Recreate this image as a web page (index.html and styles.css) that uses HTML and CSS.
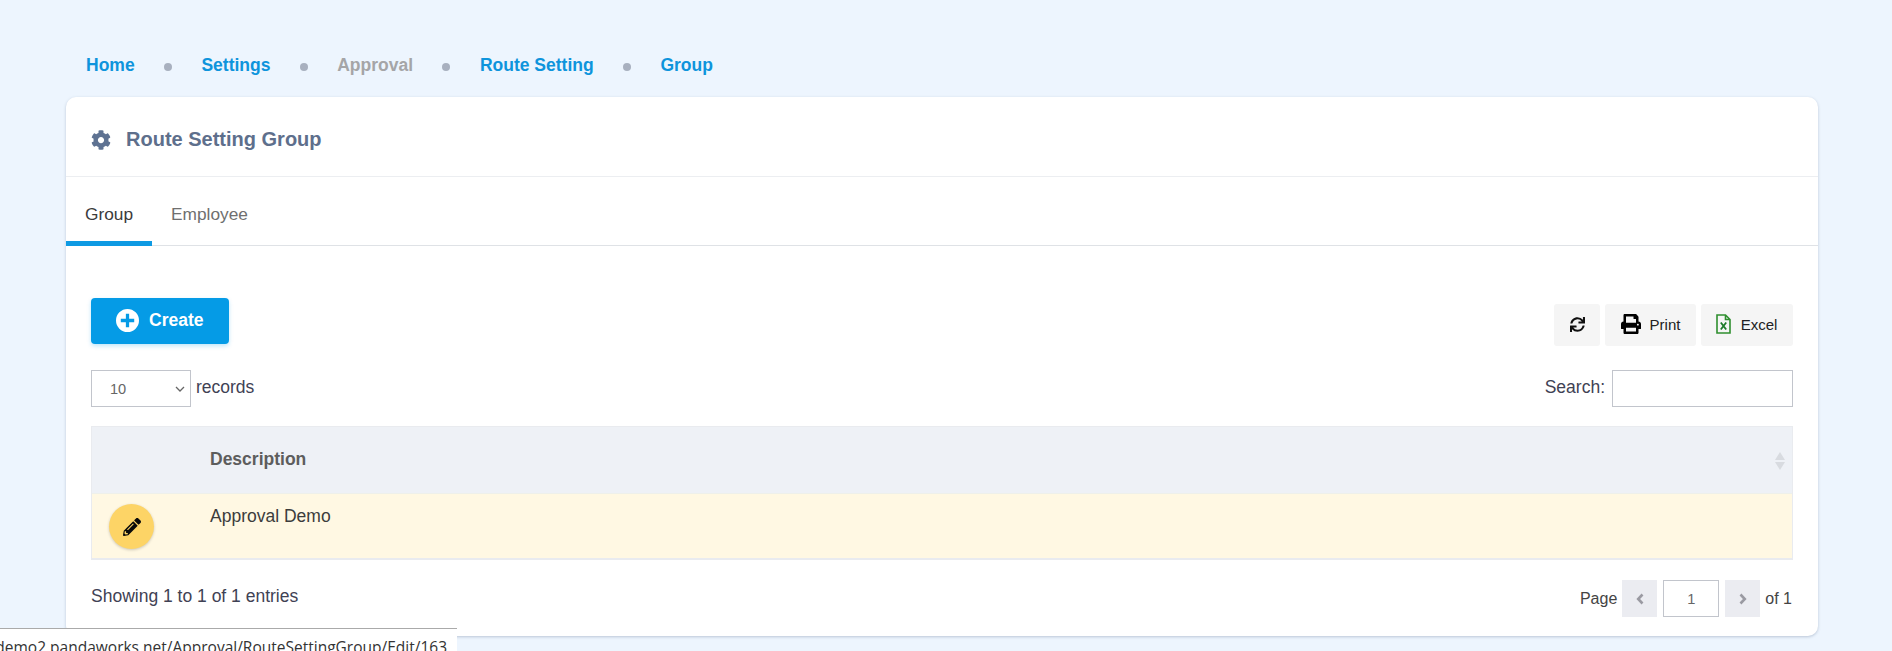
FILE: index.html
```html
<!DOCTYPE html>
<html lang="en">
<head>
<meta charset="utf-8">
<title>Route Setting Group</title>
<link rel="stylesheet" href="styles.css">
</head>
<body>
<div class="page">
  <nav class="crumbs">
    <a class="crumb">Home</a><span class="dot"></span>
    <a class="crumb">Settings</a><span class="dot"></span>
    <span class="crumb muted">Approval</span><span class="dot"></span>
    <a class="crumb">Route Setting</a><span class="dot"></span>
    <a class="crumb">Group</a>
  </nav>
  <section class="card">
    <header class="card-head">
      <svg class="gear" viewBox="0 0 512 512"><path d="M487.4 315.7l-42.6-24.6c4.3-23.2 4.3-47 0-70.2l42.6-24.6c4.9-2.8 7.1-8.6 5.5-14-11.1-35.6-30-67.8-54.7-94.6-3.8-4.1-10-5.1-14.8-2.3L380.8 110c-17.9-15.4-38.5-27.3-60.8-35.1V25.8c0-5.6-3.9-10.5-9.4-11.7-36.7-8.2-74.3-7.8-109.2 0-5.5 1.2-9.4 6.1-9.4 11.7V75c-22.2 7.9-42.8 19.8-60.8 35.1L88.7 85.5c-4.9-2.8-11-1.9-14.8 2.3-24.7 26.7-43.6 58.9-54.7 94.6-1.7 5.4.6 11.2 5.5 14L67.3 221c-4.3 23.2-4.3 47 0 70.2l-42.6 24.6c-4.9 2.8-7.1 8.6-5.5 14 11.1 35.6 30 67.8 54.7 94.6 3.8 4.1 10 5.1 14.8 2.3l42.6-24.6c17.9 15.4 38.5 27.3 60.8 35.1v49.2c0 5.6 3.9 10.5 9.4 11.7 36.7 8.2 74.3 7.8 109.2 0 5.5-1.2 9.4-6.1 9.4-11.7v-49.2c22.2-7.9 42.8-19.8 60.8-35.1l42.6 24.6c4.9 2.8 11 1.9 14.8-2.3 24.7-26.7 43.6-58.9 54.7-94.6 1.5-5.5-.7-11.3-5.6-14.1zM256 336c-44.1 0-80-35.9-80-80s35.9-80 80-80 80 35.9 80 80-35.9 80-80 80z"/></svg>
      <h1 class="title">Route Setting Group</h1>
    </header>
    <div class="tabs">
      <a class="tab active">Group</a>
      <a class="tab">Employee</a>
    </div>
    <div class="body">
      <div class="toolbar">
        <button class="create">
          <svg class="plus" viewBox="0 0 24 24"><path fill-rule="evenodd" d="M12 0a12 12 0 1 1 0 24a12 12 0 0 1 0-24zM10.3 5v5.3H5v3.4h5.3V19h3.4v-5.3H19v-3.4h-5.3V5z"/></svg>
          <span class="create-label">Create</span>
        </button>
        <div class="tools">
          <button class="tool icon-only"><svg class="ico-sync" viewBox="0 0 512 512"><path d="M440.65 12.57l4 82.77A247.16 247.16 0 0 0 255.83 8C134.73 8 33.91 94.92 12.29 209.82A12 12 0 0 0 24.09 224h49.05a12 12 0 0 0 11.67-9.26 175.91 175.91 0 0 1 317-56.94l-101.46-4.86a12 12 0 0 0-12.57 12v47.41a12 12 0 0 0 12 12H500a12 12 0 0 0 12-12V12a12 12 0 0 0-12-12h-47.37a12 12 0 0 0-11.98 12.57zM255.83 432a175.61 175.61 0 0 1-146-77.8l101.8 4.87a12 12 0 0 0 12.57-12v-47.4a12 12 0 0 0-12-12H12a12 12 0 0 0-12 12V500a12 12 0 0 0 12 12h47.35a12 12 0 0 0 12-12.6l-4.15-82.57A247.17 247.17 0 0 0 255.83 504c121.11 0 221.93-86.92 243.55-201.82a12 12 0 0 0-11.8-14.18h-49.05a12 12 0 0 0-11.67 9.26A175.86 175.86 0 0 1 255.83 432z"/></svg></button>
          <button class="tool print"><svg class="ico-print" viewBox="0 0 512 512"><path d="M448 192V77.25c0-8.49-3.37-16.62-9.37-22.63L393.37 9.37c-6-6-14.14-9.37-22.63-9.37H96C78.33 0 64 14.33 64 32v160c-35.35 0-64 28.65-64 64v112c0 8.84 7.16 16 16 16h48v96c0 17.67 14.33 32 32 32h320c17.67 0 32-14.33 32-32v-96h48c8.84 0 16-7.16 16-16V256c0-35.35-28.65-64-64-64zm-64 256H128v-96h256v96zm0-224H128V64h192v48c0 8.84 7.16 16 16 16h48v96zm48 72c-13.25 0-24-10.75-24-24 0-13.26 10.75-24 24-24s24 10.74 24 24c0 13.25-10.75 24-24 24z"/></svg><span class="tool-label">Print</span></button>
          <button class="tool excel"><svg class="ico-excel" viewBox="0 0 15 20"><path class="sheet" d="M1 1h8.5L14 5.5V19H1zM9.5 1v4.5H14"/><path class="cross" d="M4.8 8.5l5.4 7M10.2 8.5l-5.4 7"/></svg><span class="tool-label">Excel</span></button>
        </div>
      </div>
      <div class="filters">
        <label class="length"><select class="select"><option>10</option><option>25</option><option>50</option></select> records</label>
        <label class="search">Search: <input class="search-input" type="text"></label>
      </div>
      <div class="table">
        <div class="row head">
          <div class="cell-action"></div>
          <div class="cell-desc">Description</div>
          <div class="sort"><span class="up"></span><span class="down"></span></div>
        </div>
        <div class="row data">
          <div class="cell-action">
            <button class="edit"><svg class="ico-pencil" viewBox="0 0 512 512"><path d="M497.9 142.1l-46.1 46.1c-4.7 4.7-12.3 4.7-17 0l-111-111c-4.7-4.7-4.7-12.3 0-17l46.1-46.1c18.7-18.7 49.1-18.7 67.9 0l60.1 60.1c18.8 18.7 18.8 49.1 0 67.9zM284.2 99.8L21.6 362.4.4 483.9c-2.9 16.4 11.4 30.6 27.8 27.8l121.5-21.3 262.6-262.6c4.7-4.7 4.7-12.3 0-17l-111-111c-4.8-4.7-12.4-4.7-17.1 0zM124.1 339.9c-5.5-5.5-5.5-14.3 0-19.8l154-154c5.5-5.5 14.3-5.5 19.8 0s5.5 14.3 0 19.8l-154 154c-5.5 5.5-14.3 5.5-19.8 0zM88 424h48v36.3l-64.5 11.3-31.1-31.1L51.7 376H88v48z"/></svg></button>
          </div>
          <div class="cell-desc">Approval Demo</div>
        </div>
      </div>
      <div class="foot">
        <div class="info">Showing 1 to 1 of 1 entries</div>
        <div class="pager">
          Page
          <button class="page-btn"><svg class="chev" viewBox="0 0 10 14"><path d="M7.5 2.5L3.2 7l4.3 4.5"/></svg></button>
          <input class="page-input" type="text" value="1">
          <button class="page-btn"><svg class="chev" viewBox="0 0 10 14"><path d="M2.5 2.5L6.8 7l-4.3 4.5"/></svg></button>
          of 1
        </div>
      </div>
    </div>
  </section>
</div>
<div class="status"><span>demo2.pandaworks.net/Approval/RouteSettingGroup/Edit/163</span></div>
</body>
</html>
```
FILE: styles.css
```css
* { box-sizing: border-box; }
html, body { margin: 0; height: 100%; overflow: hidden; }
body {
  background: #edf5fe;
  font-family: "Liberation Sans", Arial, sans-serif;
  font-size: 17.5px;
  color: #3f4254;
}
button { font-family: inherit; border: 0; padding: 0; cursor: pointer; }

.page { padding: 55px 74px 0 66px; }

.crumbs { display: flex; align-items: center; height: 20px; padding-left: 20px; margin-bottom: 22px; }
.crumb { font-weight: 700; font-size: 17.5px; color: #0e94dc; white-space: nowrap; }
.crumb.muted { color: #a5a5a7; }
.dot { width: 8px; height: 8px; border-radius: 50%; background: #a8b0bf; margin: 3px 29.4px 0; }

.card {
  background: #fff;
  border-radius: 10px;
  height: 539px;
  box-shadow: 0 1px 3px rgba(90, 110, 140, .35);
}
.card-head { display: flex; align-items: center; height: 80px; padding: 6px 0 0 25px; border-bottom: 1px solid #eceef1; }
.gear { width: 20px; height: 20px; fill: #5e7292; margin-right: 15px; }
.title { margin: 0; font-size: 20px; font-weight: 700; color: #5e6f8c; }

.tabs { display: flex; height: 69px; border-bottom: 1px solid #dfe2e6; }
.tab { display: flex; align-items: center; height: 69px; padding: 10px 19px 0; color: #6f6f6f; border-bottom: 5px solid transparent; font-size: 17.3px; }
.tab.active { color: #3b3b3b; border-bottom-color: #0e9ae3; }

.body { padding: 52px 25px 0; }

.toolbar { display: flex; justify-content: space-between; align-items: flex-start; height: 72px; }
.create {
  display: flex; align-items: center; width: 138px; height: 46px; padding-left: 25px;
  background: #059be6; color: #fff; font-size: 17.5px; font-weight: 700; border-radius: 4px;
  box-shadow: 0 2px 4px rgba(5, 155, 230, .25);
}
.create-label { margin-top: -2px; }
.plus { width: 23px; height: 23px; fill: #fff; margin: -1px 10px 0 0; }
.tools { display: flex; gap: 5px; margin-top: 6px; }
.tool {
  display: flex; align-items: center; justify-content: center; height: 42px;
  background: #f5f5f5; color: #222; font-size: 15px; border-radius: 3px;
}
.tool-label { margin-top: -1px; }
.icon-only { width: 46px; }
.print { width: 91px; }
.excel { width: 92px; }
.ico-sync { width: 15px; height: 15px; fill: #111; margin-top: -1px; }
.ico-print { width: 20px; height: 20px; fill: #000; margin: -3px 9px 0 0; }
.ico-excel { width: 15px; height: 20px; margin: -3px 10px 0 -1px; fill: none; }
.sheet { stroke: #2f8f2f; stroke-width: 1.6; }
.cross { stroke: #1d7a2a; stroke-width: 1.8; }

.filters { display: flex; justify-content: space-between; align-items: flex-start; height: 56px; }
.length { display: flex; align-items: flex-start; gap: 5px; line-height: 34px; }
.select {
  appearance: none;
  width: 100px; height: 37px; padding-left: 18px;
  background: #fff url("data:image/svg+xml,%3Csvg xmlns='http://www.w3.org/2000/svg' width='10' height='6'%3E%3Cpath d='M1 1l4 4 4-4' fill='none' stroke='%23666' stroke-width='1.3'/%3E%3C/svg%3E") no-repeat right 5px center;
  border: 1px solid #c2c5cc; border-radius: 0;
  color: #666; font-family: inherit; font-size: 14.6px;
}
.search { display: flex; gap: 7px; line-height: 34px; }
.search-input { width: 181px; height: 37px; border: 1px solid #c2c5cc; background: #fff; }

.table { border: 1px solid #e9ebef; border-bottom-width: 2px; }
.row { display: flex; position: relative; }
.row.head { height: 66px; background: #eef1f6; align-items: center; font-weight: 700; color: #5d5d5d; }
.row.head .cell-desc { margin-top: -2px; }
.row.data { height: 65px; background: #fff8e3; color: #3c3c3c; border-top: 1px solid #eef0ea; }
.cell-action { width: 118px; padding: 10px 0 0 17px; flex: none; }
.row.head .cell-action { padding: 0; }
.row.data .cell-desc { padding-top: 12px; }
.sort { position: absolute; right: 7px; top: 25px; display: flex; flex-direction: column; gap: 2px; }
.up { border: 5.5px solid transparent; border-top: 0; border-bottom: 8px solid #d8dbe0; }
.down { border: 5.5px solid transparent; border-bottom: 0; border-top: 8px solid #d8dbe0; }
.edit {
  display: flex; align-items: center; justify-content: center; width: 45px; height: 45px;
  border-radius: 50%; background: #fdd466; box-shadow: 0 1px 3px rgba(0, 0, 0, .2);
}
.ico-pencil { width: 18px; height: 18px; fill: #0a0a0a; }

.foot { display: flex; justify-content: space-between; align-items: flex-start; padding-top: 20px; }
.info { line-height: 32px; }
.pager { display: flex; align-items: center; gap: 5px; height: 37px; margin-right: 1px; font-size: 16px; color: #444; }
.page-btn { display: flex; align-items: center; justify-content: center; width: 35px; height: 37px; background: #ebecf1; }
.chev { width: 10px; height: 14px; fill: none; stroke: #9a9aa2; stroke-width: 2.6; }
.page-input {
  width: 56px; height: 37px; margin: 0 1px; border: 1px solid #c2c5cc; text-align: center;
  font-family: inherit; font-size: 14.6px; color: #666; background: #fff;
}

.status {
  position: absolute; left: 0; top: 628px; width: 457px; height: 23px;
  display: flex; justify-content: flex-end; overflow: hidden; white-space: nowrap;
  padding: 7px 10px 0 0;
  background: #fff; border-top: 1px solid #aaa;
  font-family: "Open Sans", sans-serif; font-size: 15.5px; color: #333;
}
```
